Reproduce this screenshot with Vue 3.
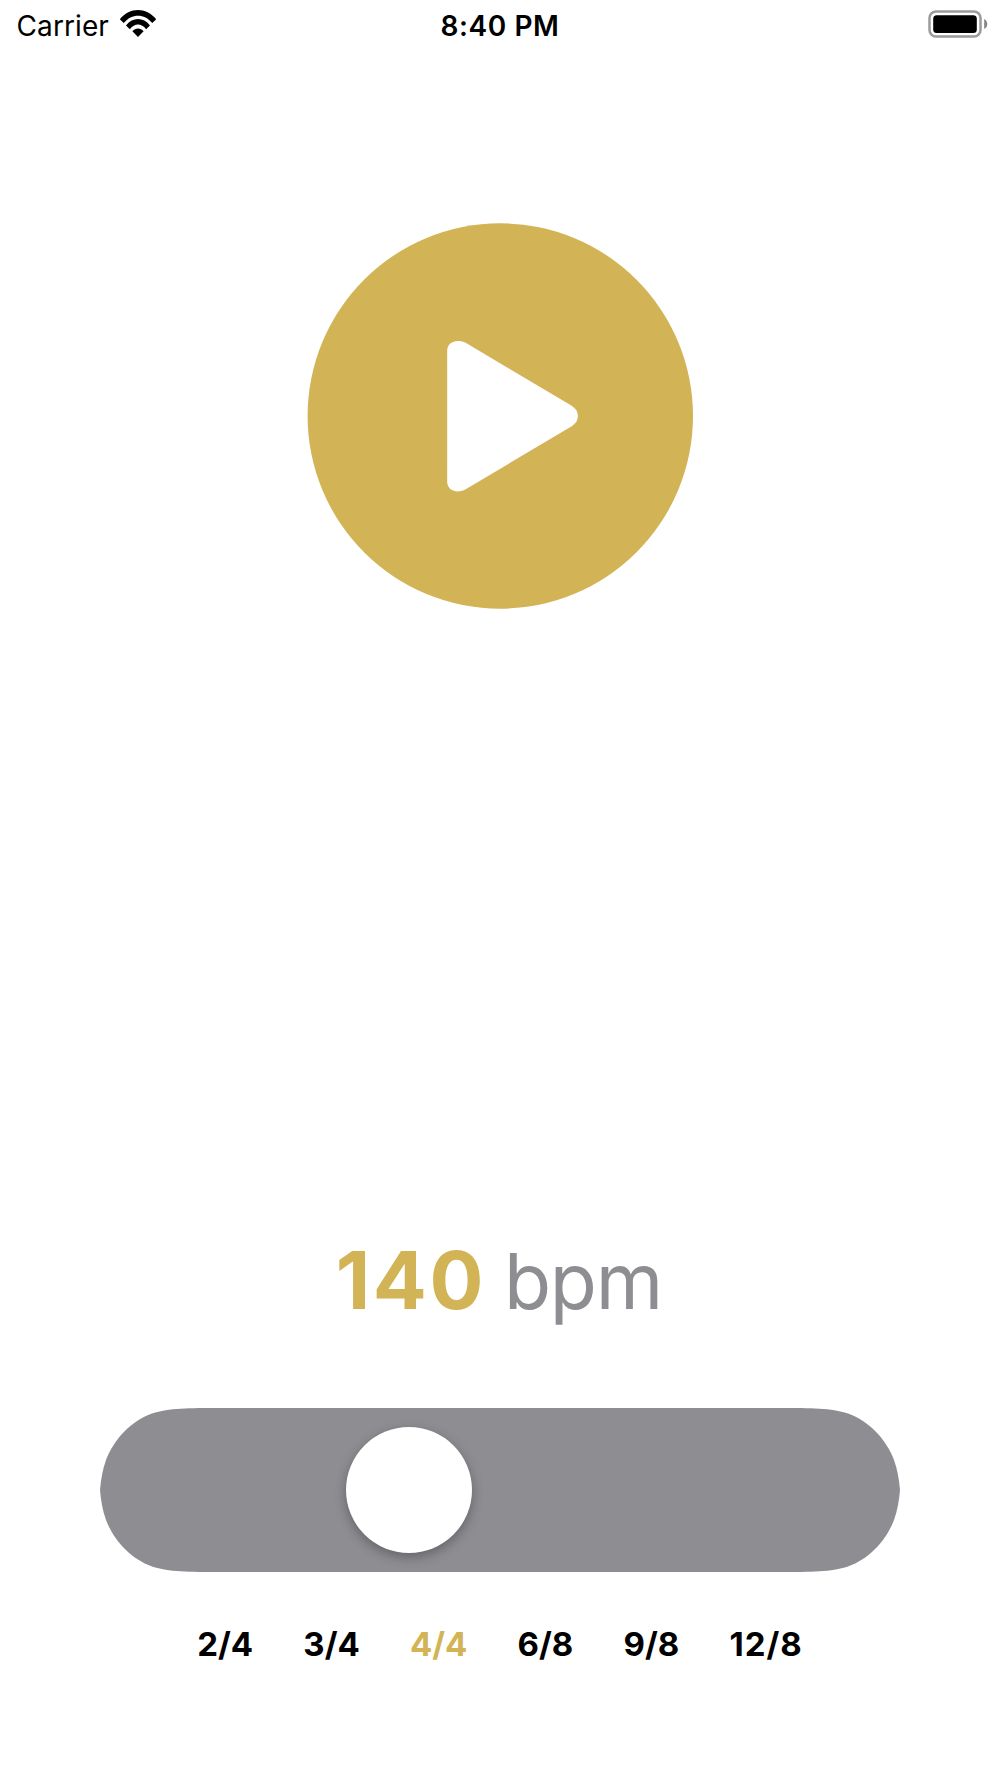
<script setup>
import { ref } from 'vue'

const bpm = ref(140)
const signatures = ['2/4', '3/4', '4/4', '6/8', '9/8', '12/8']
const selected = ref('4/4')
</script>

<template>
  <main class="screen">
    <header class="status">
      <div class="carrier">
        <span class="carrier-name">Carrier</span>
        <svg class="wifi" width="38" height="28" viewBox="0 0 38 28">
          <path d="M.8 9.200C11 -3 27 -3 37.200 9.200L33.300 13C25.300 3.200 12.700 3.200 4.700 13Z" />
          <path d="M7 15.400C13.900 7 24.100 7 31 15.400L27.100 19.200C22.300 13 15.700 13 10.900 19.200Z" />
          <path d="M13.400 21.300C16.600 17.700 21.400 17.700 24.600 21.300L19 27Z" />
        </svg>
      </div>
      <time class="time">8:40 PM</time>
      <div class="power">
        <svg class="battery" width="61" height="28" viewBox="0 0 61 28">
          <rect x="1.500" y="1.500" width="51" height="25" rx="6.500" fill="#fff" stroke="#9b9b9b" stroke-width="2.500" />
          <rect x="5.200" y="5.200" width="43.600" height="17.800" rx="3.500" />
          <path d="M56.200 9C60.300 11 60.300 17 56.200 19Z" fill="#848484" />
        </svg>
      </div>
    </header>

    <button class="play" aria-label="Play">
      <svg width="386" height="386" viewBox="0 0 386 386">
        <circle cx="193.300" cy="193" r="192.700" fill="#d2b356" />
        <path
          d="M140.200 127.500C140.200 121.500 145.200 118 150.700 118C153.700 118 156.200 118.500 158.700 119.800L264.700 182.800C268.900 185.500 270.900 189 270.900 193C270.900 197.200 268.900 200.500 264.700 203.200L158.700 266.300C156.200 267.600 153.700 268.400 150.700 268.400C145.200 268.400 140.200 264.900 140.200 259Z"
          fill="#fff"
        />
      </svg>
    </button>

    <p class="tempo"><strong class="value">{{ bpm }}</strong><span class="unit">bpm</span></p>

    <div class="slider">
      <svg class="track" width="800" height="164" viewBox="0 0 800 164">
        <path
          d="M120 0H680C711 0 731 0 748 5.500C769 13 786 31 794 52C797.500 62 799 71 800 82C799 93 797.500 102 794 112C786 133 769 151 748 158.500C731 164 711 164 680 164H120C89 164 69 164 52 158.500C31 151 14 133 6 112C2.500 102 1 93 0 82C1 71 2.500 62 6 52C14 31 31 13 52 5.500C69 0 89 0 120 0Z"
          fill="#8e8d92"
        />
      </svg>
      <span class="knob"></span>
    </div>

    <nav class="signatures">
      <span
        v-for="s in signatures"
        :key="s"
        class="signature"
        :class="{ active: s === selected, wide: s.length > 3 }"
      >{{ s }}</span>
    </nav>
  </main>
</template>

<style>
body {
  margin: 0;
  background: #fff;
}
</style>

<style scoped>
.screen {
  display: flex;
  flex-direction: column;
  align-items: center;
  box-sizing: border-box;
  width: 1000px;
  height: 1778px;
  overflow: hidden;
  background: #fff;
  color: #000;
  font-family: Inter, "Liberation Sans", sans-serif;
}

.status {
  display: grid;
  grid-template-columns: 1fr auto 1fr;
  width: 100%;
  height: 50px;
  line-height: 52px;
  font-size: 28px;
}

.carrier {
  display: flex;
  padding-left: 16.5px;
}

.carrier-name {
  width: 102.9px;
  letter-spacing: 0.1px;
}

.wifi {
  margin-top: 10px;
}

.time {
  letter-spacing: 0.6px;
  font-weight: 600;
}

.power {
  display: flex;
  justify-content: flex-end;
  padding: 10px 11px 0 0;
}

.play {
  display: flex;
  margin: 173px 0 0;
  padding: 0;
  border: 0;
  background: none;
}

.tempo {
  display: flex;
  align-items: baseline;
  justify-content: center;
  gap: 18px;
  height: 100px;
  margin: 620.5px 2.5px 0 0;
  line-height: 100px;
  font-size: 80px;
}

.value {
  color: #d2b356;
  font-weight: 700;
  letter-spacing: 2.6px;
}

.unit {
  color: #8e8d92;
  font-size: 77px;
  font-weight: 400;
  letter-spacing: -1.3px;
}

.slider {
  position: relative;
  width: 800px;
  height: 164px;
  margin-top: 78px;
}

.track {
  display: block;
}

.knob {
  position: absolute;
  top: 19px;
  left: 246px;
  width: 126px;
  height: 126px;
  border-radius: 50%;
  background: #fff;
  box-shadow: 0 4px 12px rgba(0, 0, 0, 0.3);
}

.signatures {
  display: flex;
  justify-content: center;
  gap: 50.2px;
  margin-top: 52px;
  line-height: 40px;
  font-size: 33px;
  font-weight: 700;
}

.active {
  color: #d2b356;
}

.wide {
  letter-spacing: 1px;
}
</style>
